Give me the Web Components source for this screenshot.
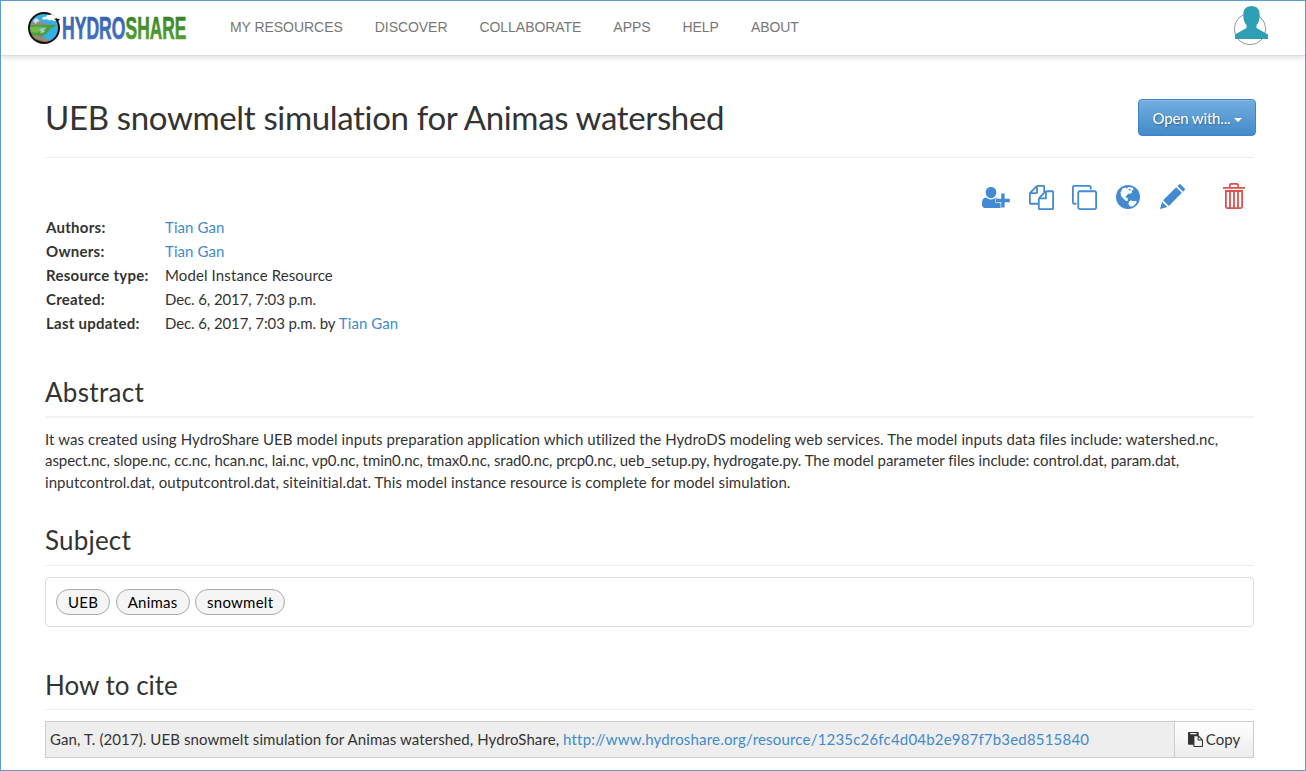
<!DOCTYPE html>
<html lang="en">
<head>
<meta charset="utf-8">
<title>UEB snowmelt simulation for Animas watershed | HydroShare</title>
<style>
html,body{margin:0;padding:0}
body{font:15px/21.43px Lato,sans-serif;color:#333;background:#fff;font-variant-ligatures:none}
</style>
</head>
<body>
<hs-page></hs-page>
<script>
const define=(name,html)=>customElements.define(name,class extends HTMLElement{
  constructor(){super();this.attachShadow({mode:'open'}).innerHTML=html;}
});

define('hs-logo',`<style>:host{display:block;width:160px;height:34px}svg{display:block;overflow:visible}text{font:bold 31px "Liberation Sans",sans-serif;stroke-width:.7px}</style>
<svg width="160" height="34" viewBox="28 11 160 34">
<defs><clipPath id="c"><circle cx="44" cy="28" r="15"/></clipPath>
<linearGradient id="b" x1="0" y1="0" x2="0" y2="1"><stop offset="0" stop-color="#3561a5"/><stop offset="1" stop-color="#4674c3"/></linearGradient>
<linearGradient id="g" x1="0" y1="0" x2="0" y2="1"><stop offset="0" stop-color="#327a28"/><stop offset="1" stop-color="#5aa630"/></linearGradient></defs>
<g clip-path="url(#c)"><path fill="#38aee6" d="M28 12h32v32H28z"/>
<path fill="#8a9191" d="M28 27l5-6 3-3 4 3 5 2 5 3v2H28z"/><path fill="#ddd" d="M33 21l3-3 4 3-3 1-1 2z"/>
<path fill="#4f9d38" d="M28 26q9-2 19-1 7-1 9 0l-4 4-3 4-4 3q-8 1-17 0z"/><path fill="#72b94a" d="M29 27q8-1 17 0l-5 3-4 3-8-1z"/>
<path fill="#9dccd0" d="M41 28.500l6-1-3 2.500 1 2-5 1.500 1-2-2-1z"/>
<path fill="#978a74" d="M28 35.500q7-1 14 1l9 5-4 4H30z"/><path fill="#5d5145" d="M29 39q9 0 17 3l-4 3H30z"/>
<path fill="#33b1e6" d="M43 36l4-3 4-5 9-2-2 12-6 4z"/></g>
<circle cx="44" cy="28" r="15" fill="none" stroke="#111" stroke-width="2"/>
<path fill="#fff" d="M42 19q1-3 4-2 1-3 4-2 3-2 4 1 4 0 2 3l3 1q-3 2-8 0-3 1-4-1-3 1-5 0z"/><path fill="#111" d="M54 18.500l6 .5-2.500 3z"/>
<text transform="translate(62 38.600) scale(.567 1)" fill="url(#b)" stroke="url(#b)">HYDRO</text>
<text transform="translate(125.600 38.600) scale(.56 1)" fill="url(#g)" stroke="url(#g)">SHARE</text>
</svg>`);

define('hs-avatar',`<style>:host{display:block;width:36px;height:42px}svg{display:block}</style>
<svg width="36" height="42" viewBox="1233 4 36 42"><circle cx="1250" cy="29" r="15.7" fill="#fff" stroke="#999"/>
<path fill="#2e9fb5" d="M1251.500 6c5.500 0 8.200 3.500 8.200 8.500 0 4.500-.7 8-3.200 10.500v3l11.500 6.500V39h-33v-4.500l11.500-6.500v-3c-2.500-2.500-3.200-6-3.200-10.500 0-5 2.700-8.500 8.200-8.500z"/></svg>`);

define('hs-nav-link',`<style>:host{display:block;font:14px/20px "Liberation Sans",Arial,sans-serif;letter-spacing:-.05px;color:#777;white-space:nowrap}</style><slot></slot>`);

define('hs-header',`<style>
:host{display:flex;box-sizing:border-box;height:55px;padding:10px 36px 0 27px;border-bottom:1px solid #ddd;box-shadow:0 2px 5px rgba(0,0,0,.13);background:#fff;align-items:flex-start}
nav{display:flex;margin:6px 0 0 42px;gap:32px}
hs-avatar{margin:-7px 0 0 auto}
</style><hs-logo></hs-logo><nav><hs-nav-link>MY RESOURCES</hs-nav-link><hs-nav-link>DISCOVER</hs-nav-link><hs-nav-link>COLLABORATE</hs-nav-link><hs-nav-link>APPS</hs-nav-link><hs-nav-link>HELP</hs-nav-link><hs-nav-link>ABOUT</hs-nav-link></nav><hs-avatar></hs-avatar>`);

define('hs-open-button',`<style>
:host{display:flex;box-sizing:border-box;width:118px;height:37px;padding-top:2px;border:1px solid #4084c7;border-radius:4px;background:linear-gradient(#73aee0,#428bca);box-shadow:inset 0 1px 0 rgba(255,255,255,.18);color:#fff;align-items:center;justify-content:center;gap:3px;letter-spacing:-.15px;text-shadow:1px 1px 2px rgba(0,0,0,.35)}
i{border:4px solid transparent;border-top-color:#fff;border-bottom:0;margin-top:2px}
</style><span>Open with...</span><i></i>`);

const icons={
user:['982 183 29 28','<path d="M991 187c3 0 5.300 2.200 5.300 5.200 0 3.200-2.400 6-5.300 6s-5.300-2.800-5.300-6c0-3 2.300-5.200 5.300-5.200zM986 197.500q5 4 10 0c1.500 0 2.800.7 3.600 1.800v4.200h4v4.500h-18.500c-2 0-3.100-1.300-3.100-3.500 0-4 .8-7 4-7z"/><path d="M1001.200 193.500h3.400v5.300h5.200v3.400h-5.200v5.300h-3.400v-5.300h-5.200v-3.400h5.200z" stroke="#fff" stroke-width="1.200" paint-order="stroke"/>'],
files:['0 0 1792 1792','<path d="M1696 384q40 0 68 28t28 68v1216q0 40-28 68t-68 28h-960q-40 0-68-28t-28-68v-288h-544q-40 0-68-28t-28-68v-672q0-40 20-88t48-76l408-408q28-28 76-48t88-20h416q40 0 68 28t28 68v328q68-40 128-40h416zm-544 213l-299 299h299v-299zm-640-384l-299 299h299v-299zm196 647l316-316v-416h-384v416q0 40-28 68t-68 28h-416v640h512v-256q0-40 20-88t48-76zm956 804v-1152h-384v416q0 40-28 68t-68 28h-416v640h896z"/>'],
clone:['0 0 1792 1792','<path d="M1664 1632v-1088q0-13-9.500-22.500t-22.500-9.500h-1088q-13 0-22.500 9.500t-9.500 22.500v1088q0 13 9.500 22.500t22.500 9.500h1088q13 0 22.500-9.500t9.500-22.500zm128-1088v1088q0 66-47 113t-113 47h-1088q-66 0-113-47t-47-113v-1088q0-66 47-113t113-47h1088q66 0 113 47t47 113zm-384-384v160h-128v-160q0-13-9.500-22.500t-22.500-9.500h-1088q-13 0-22.500 9.500t-9.500 22.500v1088q0 13 9.500 22.500t22.500 9.500h160v128h-160q-66 0-113-47t-47-113v-1088q0-66 47-113t113-47h1088q66 0 113 47t47 113z"/>'],
globe:['0 0 24 24','<circle cx="12" cy="12" r="12"/><path fill="#fff" d="M6.500 3.500l3-1 1.200 1 1.800-1.500 4.500.8.500 2.200-2 .8.800 1.500-2.300 1.700-2-.5-1 2-1.500.5.500 1.500 2 1-.5 2.500-1.500 0-2.500-2.500-2.500-2.500-.5-3.500 1-2zM13 16.500l2-1.200 2 1 3.500-.5-.3 2.500-3.200 3-3 .2-1.500-2.500z"/><path d="M12.500 4.500l1.500-.7.8 1.200-1.500 1z"/>'],
pencil:['0 0 24 24','<path d="M0 24l2-7 5 5zM3 15.500L15.500 3l5.500 5.500L8.500 21zM16.700 1.900L18 .6q1-1 2 0l3.500 3.500q1 1 0 2l-1.300 1.300z"/>'],
trash:['0 0 22 26','<path fill="none" stroke="currentColor" stroke-width="1.800" d="M0 4.800h22M6.800 4.500V2.200q0-1.300 1.300-1.300h5.800q1.300 0 1.300 1.300v2.300M2.900 8v15.600q0 1.500 1.500 1.500h13.200q1.500 0 1.500-1.500V8zM7 8v17M11 8v17M15 8v17"/>'],
paste:['0 0 1792 1792','<path d="M768 1664h896v-640h-416q-40 0-68-28t-28-68v-416h-384v1152zm256-1440v-64q0-13-9.500-22.500t-22.500-9.500h-704q-13 0-22.500 9.500t-9.500 22.500v64q0 13 9.500 22.500t22.500 9.500h704q13 0 22.500-9.500t9.500-22.500zm256 672h299l-299-299v299zm512 128v672q0 40-28 68t-68 28h-960q-40 0-68-28t-28-68v-160h-544q-40 0-68-28t-28-68v-1344q0-40 28-68t68-28h1088q40 0 68 28t28 68v328q21 13 36 28l408 408q28 28 48 76t20 88z"/>']};
customElements.define('hs-icon',class extends HTMLElement{connectedCallback(){if(this.shadowRoot)return;
  const [box,art]=icons[this.getAttribute('name')];
  this.attachShadow({mode:'open'}).innerHTML=`<style>:host{display:block}svg{display:block;width:100%;height:100%;fill:currentColor}</style><svg viewBox="${box}">${art}</svg>`;}});

define('hs-actions',`<style>
:host{display:flex;height:26px;justify-content:flex-end;padding-right:9px;color:#428bd2}
hs-icon{width:25px;height:25px;margin-top:1.500px}
.u{width:29px;height:28px;margin:0 18px 0 0}.f{margin-right:18px}.c{margin-right:19px}.g{width:24px;height:24px;margin:2px 20px 0 0}.p{width:25px;height:25px;margin:1px 38px 0 0}.t{width:22px;height:26px;margin:0;color:#d9534f}
</style><hs-icon class="u" name="user"></hs-icon><hs-icon class="f" name="files"></hs-icon><hs-icon class="c" name="clone"></hs-icon><hs-icon class="g" name="globe"></hs-icon><hs-icon class="p" name="pencil"></hs-icon><hs-icon class="t" name="trash"></hs-icon>`);

define('hs-link',`<style>:host{display:inline;color:#428bca}</style><slot></slot>`);
define('hs-row',`<style>:host{display:grid;grid-template-columns:119px 1fr;line-height:24px;padding-left:1px;white-space:nowrap}b{font-weight:700;letter-spacing:.27px}::slotted(hs-link){letter-spacing:.08px}</style><b><slot name="label"></slot></b><span><slot></slot></span>`);
define('hs-section',`<style>:host{display:block}h3{box-sizing:border-box;margin:0 0 11px;height:var(--head,39px);border-bottom:var(--rule,1px solid #eee);font-weight:400;font-size:26px;line-height:28px;letter-spacing:var(--track,0);color:#333}</style><h3><slot name="heading"></slot></h3><slot></slot>`);
define('hs-tag',`<style>:host{display:block;box-sizing:border-box;height:26px;border:1px solid #aaa;border-radius:13px;background:#f5f5f5;padding:0 11px;line-height:25px;letter-spacing:.25px;color:#000}</style><slot></slot>`);
define('hs-tags',`<style>:host{display:flex;box-sizing:border-box;height:50px;border:1px solid #ddd;border-radius:4px;padding:11px 10px;gap:5.500px}</style><slot></slot>`);
define('hs-citation',`<style>:host{display:flex;box-sizing:border-box;height:37px;border:1px solid #ccc;background:#eee;line-height:35px}
.q{flex:1;padding-left:4px;white-space:nowrap;letter-spacing:.09px}::slotted(hs-link){letter-spacing:.19px}.b{display:flex;box-sizing:border-box;width:79px;border-left:1px solid #ccc;background:linear-gradient(#fff,#ececec);align-items:center;justify-content:center;gap:3px}hs-icon{width:15px;height:15px}</style><div class="q"><slot></slot></div><div class="b"><hs-icon name="paste"></hs-icon><span>Copy</span></div>`);

define('hs-page',`<style>
:host{display:block;box-sizing:border-box;width:1306px;height:771px;border:1px solid #5b9bd5;overflow:hidden;background:#fff}
main{padding:43px 51px 0 44px}
.title{display:flex;box-sizing:border-box;height:59px;border-bottom:1px solid #eee;justify-content:space-between}
h1{margin:0;font-weight:400;font-size:33px;line-height:37px;letter-spacing:-.34px;white-space:nowrap}
hs-open-button{margin-right:-2px}
hs-actions{margin-top:25px}
.meta{margin-top:6px}
.type{letter-spacing:.12px}.date{letter-spacing:-.1px}
.abs{margin-top:43px;--rule:2px solid #f3f3f3;--head:40px;--track:.3px}.sub{margin-top:33px;--head:40px;--track:.2px}.cite{margin-top:44px}
p{margin:0;white-space:nowrap}
.l1{letter-spacing:.083px}.l2{letter-spacing:-.05px}.l3{letter-spacing:.075px}
</style>
<hs-header></hs-header>
<main>
<div class="title"><h1>UEB snowmelt simulation for Animas watershed</h1><hs-open-button></hs-open-button></div>
<hs-actions></hs-actions>
<div class="meta">
<hs-row><span slot="label">Authors:</span><hs-link>Tian Gan</hs-link></hs-row>
<hs-row><span slot="label">Owners:</span><hs-link>Tian Gan</hs-link></hs-row>
<hs-row class="type"><span slot="label">Resource type:</span>Model Instance Resource</hs-row>
<hs-row class="date"><span slot="label">Created:</span>Dec. 6, 2017, 7:03 p.m.</hs-row>
<hs-row class="date"><span slot="label">Last updated:</span>Dec. 6, 2017, 7:03 p.m. by <hs-link>Tian Gan</hs-link></hs-row>
</div>
<hs-section class="abs"><span slot="heading">Abstract</span>
<p><span class="l1">It was created using HydroShare UEB model inputs preparation application which utilized the HydroDS modeling web services. The model inputs data files include: watershed.nc,</span><br><span class="l2">aspect.nc, slope.nc, cc.nc, hcan.nc, lai.nc, vp0.nc, tmin0.nc, tmax0.nc, srad0.nc, prcp0.nc, ueb_setup.py, hydrogate.py. The model parameter files include: control.dat, param.dat,</span><br><span class="l3">inputcontrol.dat, outputcontrol.dat, siteinitial.dat. This model instance resource is complete for model simulation.</span></p></hs-section>
<hs-section class="sub"><span slot="heading">Subject</span>
<hs-tags><hs-tag>UEB</hs-tag><hs-tag>Animas</hs-tag><hs-tag>snowmelt</hs-tag></hs-tags></hs-section>
<hs-section class="cite"><span slot="heading">How to cite</span>
<hs-citation>Gan, T. (2017). UEB snowmelt simulation for Animas watershed, HydroShare, <hs-link>http://www.hydroshare.org/resource/1235c26fc4d04b2e987f7b3ed8515840</hs-link></hs-citation></hs-section>
</main>`);
</script>
</body>
</html>
